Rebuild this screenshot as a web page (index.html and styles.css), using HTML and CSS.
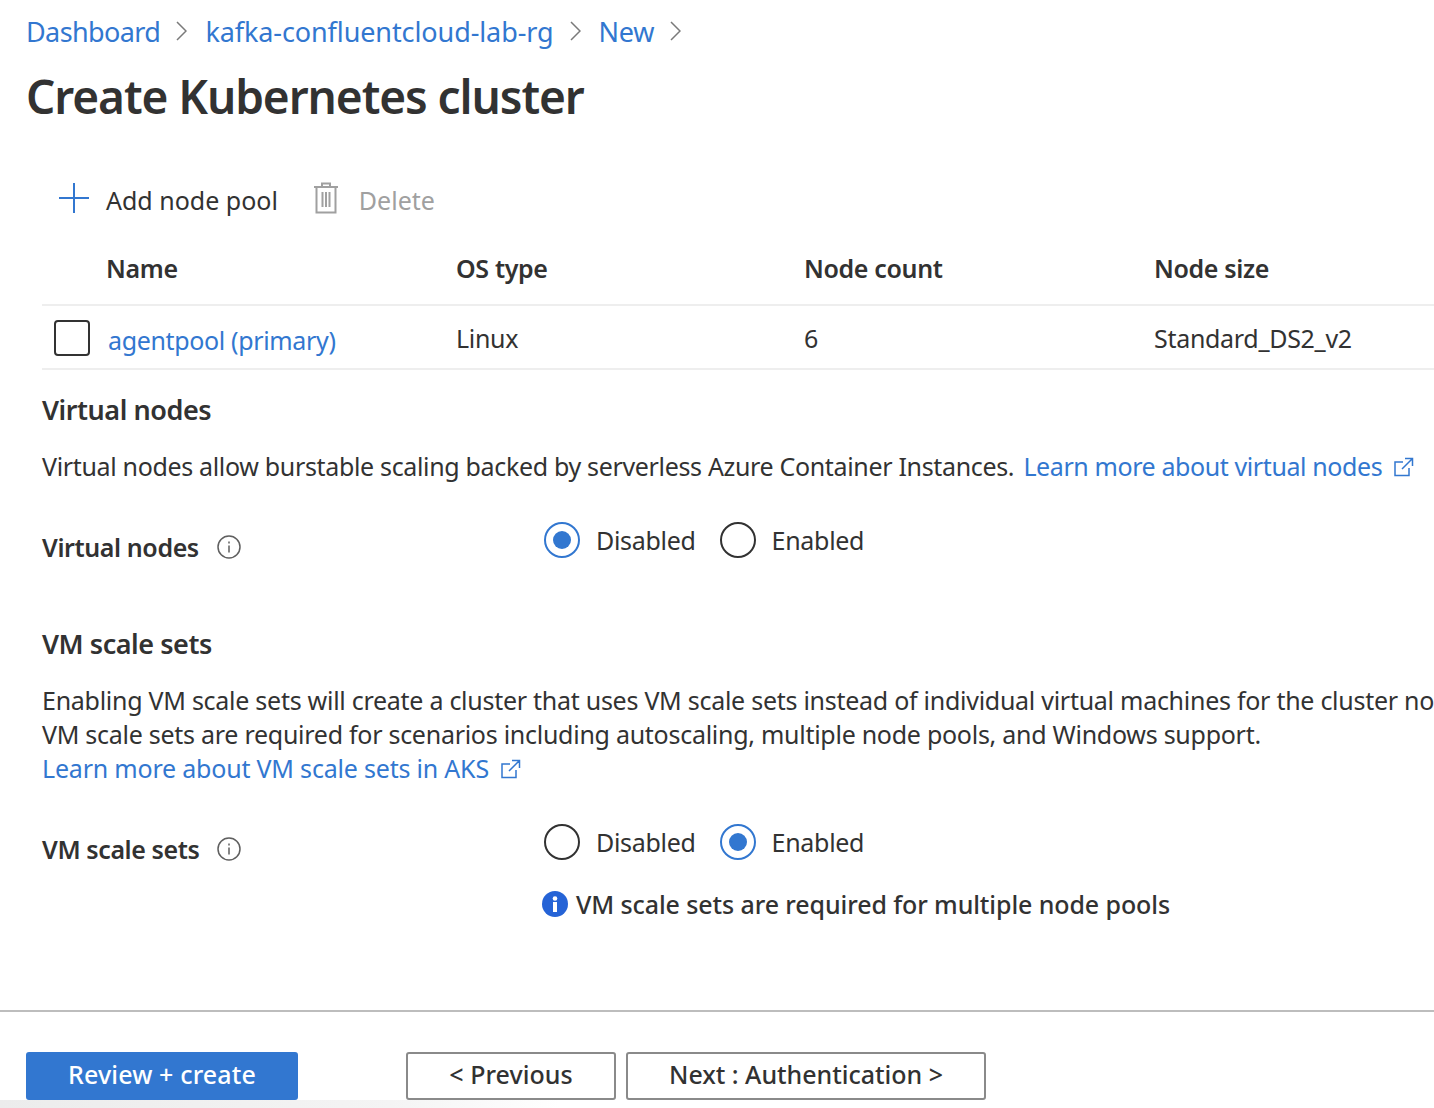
FILE: index.html
```html
<!DOCTYPE html>
<html lang="en">
<head>
    <meta charset="UTF-8">
    <meta name="viewport" content="width=device-width, initial-scale=1.0">
    <title>Create Kubernetes cluster</title>
    <link rel="stylesheet" href="styles.css">
</head>
<body>
    <div class="page-head">
        <nav class="crumbs">
            <a class="link crumb-home">Dashboard</a>
            <svg class="chevron" viewBox="0 0 11 20"><path d="M1 1l9 9-9 9"/></svg>
            <a class="link crumb-group">kafka-confluentcloud-lab-rg</a>
            <svg class="chevron" viewBox="0 0 11 20"><path d="M1 1l9 9-9 9"/></svg>
            <a class="link">New</a>
            <svg class="chevron" viewBox="0 0 11 20"><path d="M1 1l9 9-9 9"/></svg>
        </nav>
        <h1>Create Kubernetes cluster</h1>
    </div>

    <main class="content">
        <div class="toolbar">
            <button class="tool">
                <svg class="tool-plus" viewBox="0 0 30 30"><path d="M15 0v30M0 15h30"/></svg>
                Add node pool
            </button>
            <button class="tool tool-off">
                <svg class="tool-trash" viewBox="0 0 26 32"><path d="M1 5h24M3.500 5v25.500h19V5M9 5V1.500h8V5M9.500 10v15M13 10v15M16.500 10v15"/></svg>
                Delete
            </button>
        </div>

        <div class="pool-row pool-head">
            <span></span>
            <span>Name</span>
            <span>OS type</span>
            <span>Node count</span>
            <span>Node size</span>
        </div>
        <div class="pool-row pool-item">
            <span class="checkbox"></span>
            <a class="link pool-name">agentpool (primary)</a>
            <span>Linux</span>
            <span>6</span>
            <span>Standard_DS2_v2</span>
        </div>

        <h2 class="first">Virtual nodes</h2>
        <p class="para para-tight">
            Virtual nodes allow burstable scaling backed by serverless Azure Container Instances.
            <a class="link ext">Learn more about virtual nodes
                <svg class="ext-icon" viewBox="0 0 20 20"><path d="M15 11v7.500H1V5h8M11 1.500h7.500V9M18.500 1.500L8 12"/></svg>
            </a>
        </p>
        <div class="field">
            <div class="field-label">
                Virtual nodes
                <svg class="info" viewBox="0 0 24 24"><circle cx="12" cy="12" r="11"/><path d="M12 10.500v7M12 6.500v2"/></svg>
            </div>
            <div class="radios">
                <span class="radio on"></span><span class="radio-text">Disabled</span>
                <span class="radio"></span><span class="radio-text">Enabled</span>
            </div>
        </div>

        <h2 class="second">VM scale sets</h2>
        <div class="para para-wide">
            <div>Enabling VM scale sets will create a cluster that uses VM scale sets instead of individual virtual machines for the cluster nodes.</div>
            <div>VM scale sets are required for scenarios including autoscaling, multiple node pools, and Windows support.</div>
            <div><a class="link learn-aks">Learn more about VM scale sets in AKS
                <svg class="ext-icon" viewBox="0 0 20 20"><path d="M15 11v7.500H1V5h8M11 1.500h7.500V9M18.500 1.500L8 12"/></svg>
            </a></div>
        </div>
        <div class="field">
            <div class="field-label">
                VM scale sets
                <svg class="info" viewBox="0 0 24 24"><circle cx="12" cy="12" r="11"/><path d="M12 10.500v7M12 6.500v2"/></svg>
            </div>
            <div class="radios">
                <span class="radio"></span><span class="radio-text">Disabled</span>
                <span class="radio on"></span><span class="radio-text">Enabled</span>
            </div>
        </div>
        <div class="notice">
            <svg class="notice-icon" viewBox="0 0 26 26"><circle cx="13" cy="13" r="13"/><rect x="11" y="11" width="4" height="10" fill="#fff"/><circle cx="13" cy="7.500" r="2.300" fill="#fff"/></svg>
            VM scale sets are required for multiple node pools
        </div>
    </main>

    <footer class="footer">
        <button class="btn btn-primary">Review + create</button>
        <button class="btn btn-prev">&lt; Previous</button>
        <button class="btn btn-next">Next : Authentication &gt;</button>
    </footer>
</body>
</html>
```

FILE: styles.css
```css
* {
    box-sizing: border-box;
}

html, body {
    height: 100%;
}

body {
    margin: 0;
    height: 1108px;
    overflow: hidden;
    background: #fff;
    color: #323232;
    font-family: "Noto Sans", "Open Sans", sans-serif;
    font-size: 25px;
    letter-spacing: -0.3px;
    display: flex;
    flex-direction: column;
}

.link {
    color: #3277d0;
}

/* Header */
.page-head {
    padding: 11px 0 0 26px;
    height: 152px;
}

.crumbs {
    display: flex;
    align-items: center;
    height: 40px;
    font-size: 27px;
    letter-spacing: -0.25px;
}

.crumb-home {
    letter-spacing: -0.6px;
}

.crumb-group {
    letter-spacing: -0.1px;
}

.chevron {
    width: 11px;
    height: 20px;
    margin: 0 18px 0 16px;
    fill: none;
    stroke: #7a7a7a;
    stroke-width: 1.500;
}

h1 {
    margin: 0;
    padding-top: 15px;
    font-size: 46px;
    line-height: 60px;
    font-weight: 600;
    letter-spacing: -1.08px;
    white-space: nowrap;
}

/* Content */
.content {
    flex: 1;
    padding-left: 42px;
    white-space: nowrap;
}

.toolbar {
    display: flex;
    height: 96px;
    padding: 30px 0 0 17px;
    gap: 35px;
}

.tool {
    display: flex;
    align-items: center;
    height: 36px;
    padding: 0;
    border: none;
    background: none;
    font: inherit;
    letter-spacing: 0;
    color: inherit;
}

.tool-off {
    color: #a0a0a0;
}

.tool-plus {
    width: 30px;
    height: 30px;
    margin: -4px 17px 0 0;
    fill: none;
    stroke: #3277d0;
    stroke-width: 2;
}

.tool-trash {
    width: 26px;
    height: 32px;
    margin: -4px 20px 0 0;
    fill: none;
    stroke: #a0a0a0;
    stroke-width: 2;
}

.pool-row {
    display: grid;
    grid-template-columns: 64px 350px 348px 350px 1fr;
    align-items: center;
    border-bottom: 2px solid #eee;
}

.pool-head {
    height: 58px;
    font-weight: 600;
    padding-bottom: 16px;
    letter-spacing: -0.35px;
}

.pool-item {
    height: 64px;
    padding-top: 2px;
}

.checkbox {
    display: block;
    width: 36px;
    height: 36px;
    margin-left: 12px;
    border: 2px solid #323232;
    border-radius: 4px;
}

.pool-name {
    margin-left: 2px;
    padding-top: 4px;
    letter-spacing: -0.35px;
}

h2 {
    margin: 0;
    font-size: 27px;
    line-height: 34px;
    font-weight: 600;
    letter-spacing: -0.45px;
}

h2.first {
    margin-top: 23px;
}

h2.second {
    margin-top: 63px;
}

.para {
    margin: 22px 0 0;
    line-height: 34px;
}

.para-tight {
    letter-spacing: -0.335px;
}

.para-wide {
    letter-spacing: -0.27px;
}

.ext {
    margin-left: 3px;
    letter-spacing: -0.4px;
}

.learn-aks {
    letter-spacing: -0.2px;
}

.ext-icon {
    width: 20px;
    height: 20px;
    margin-left: 6px;
    fill: none;
    stroke: #3277d0;
    stroke-width: 1.500;
    vertical-align: -1px;
}

.field {
    display: grid;
    grid-template-columns: 502px 1fr;
    height: 48px;
    margin-top: 33px;
}

.field-label {
    display: flex;
    align-items: center;
    font-weight: 600;
    padding-top: 14px;
    letter-spacing: -0.4px;
}

.info {
    width: 24px;
    height: 24px;
    margin-left: 18px;
    fill: none;
    stroke: #5f5f5f;
    stroke-width: 1.500;
}

.radios {
    display: flex;
    align-items: center;
}

.radio {
    position: relative;
    width: 36px;
    height: 36px;
    border: 2px solid #323232;
    border-radius: 50%;
}

.radio.on {
    border-color: #3277d0;
}

.radio.on::after {
    content: "";
    position: absolute;
    top: 7px;
    left: 7px;
    width: 18px;
    height: 18px;
    border-radius: 50%;
    background: #3277d0;
}

.radio-text {
    margin: 0 24px 0 16px;
}

.notice {
    display: flex;
    align-items: center;
    margin: 20px 0 0 500px;
    height: 36px;
    font-weight: 500;
    letter-spacing: -0.1px;
}

.notice-icon {
    width: 26px;
    height: 26px;
    margin-right: 8px;
    fill: #2563d6;
}

/* Footer */
.footer {
    position: relative;
    display: flex;
    height: 98px;
    padding: 40px 0 0 26px;
    border-top: 2px solid #bdbdbd;
}

.footer::after {
    content: "";
    position: absolute;
    left: 0;
    bottom: 0;
    width: 560px;
    height: 8px;
    background: linear-gradient(to right, #ececec, #f4f4f4 70%, #fff);
    z-index: -1;
}

.btn {
    height: 48px;
    padding: 0 0 4px;
    font: inherit;
    letter-spacing: 0.05px;
    font-weight: 500;
    border-radius: 3px;
    color: #323232;
    background: #fff;
    border: 2px solid #8a8a8a;
}

.btn-primary {
    width: 272px;
    color: #fff;
    background: #3277d0;
    border-color: #3277d0;
    letter-spacing: 0.15px;
}

.btn-prev {
    width: 210px;
    margin-left: 108px;
}

.btn-next {
    width: 360px;
    margin-left: 10px;
    letter-spacing: -0.03px;
}
```
